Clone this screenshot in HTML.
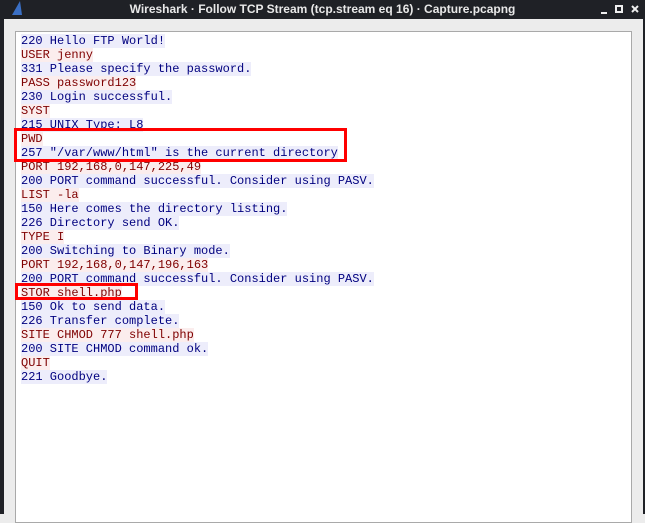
<html><head><style>
body{margin:0;width:645px;height:514px;background:#ececec;position:relative;overflow:hidden;font-family:"Liberation Sans",sans-serif}
.tb{position:absolute;left:0;top:0;width:645px;height:19px;background:#1f2126;color:#e8e8e8;font-size:12px;font-weight:bold;text-align:center;line-height:18px}
.ld{position:absolute;left:0;top:19px;width:4px;height:495px;background:#1f2126}
.rd{position:absolute;right:0;top:19px;width:2px;height:495px;background:#1f2126}
.ta{position:absolute;left:15px;top:31px;width:615px;height:490px;background:#fff;border:1px solid #a9a9a9}
.t{position:absolute;left:21px;top:34px;font:12px/14px "Liberation Mono",monospace;white-space:pre}
.c{color:#7f0000;background:#fbeded}.s{color:#00007f;background:#ededfb}
.box{position:absolute;border:3px solid #f00}
</style></head><body>
<div class="tb">Wireshark · Follow TCP Stream (tcp.stream eq 16) · Capture.pcapng</div>
<svg style="position:absolute;left:10px;top:0" width="14" height="16"><path d="M2 15 L10 1 L12 15 Z" fill="#3a6fc4"/></svg>
<svg style="position:absolute;left:600px;top:0" width="45" height="18"><rect x="1" y="12" width="6" height="2" fill="#eee"/><rect x="16" y="6" width="6" height="6" fill="none" stroke="#eee" stroke-width="2"/><path d="M32 6 L38 12 M38 6 L32 12" stroke="#eee" stroke-width="2"/></svg>
<div class="ld"></div><div class="rd"></div>
<div class="ta"></div>
<div class="t"><span class="s">220 Hello FTP World!</span>
<span class="c">USER jenny</span>
<span class="s">331 Please specify the password.</span>
<span class="c">PASS password123</span>
<span class="s">230 Login successful.</span>
<span class="c">SYST</span>
<span class="s">215 UNIX Type: L8</span>
<span class="c">PWD</span>
<span class="s">257 "/var/www/html" is the current directory</span>
<span class="c">PORT 192,168,0,147,225,49</span>
<span class="s">200 PORT command successful. Consider using PASV.</span>
<span class="c">LIST -la</span>
<span class="s">150 Here comes the directory listing.</span>
<span class="s">226 Directory send OK.</span>
<span class="c">TYPE I</span>
<span class="s">200 Switching to Binary mode.</span>
<span class="c">PORT 192,168,0,147,196,163</span>
<span class="s">200 PORT command successful. Consider using PASV.</span>
<span class="c">STOR shell.php</span>
<span class="s">150 Ok to send data.</span>
<span class="s">226 Transfer complete.</span>
<span class="c">SITE CHMOD 777 shell.php</span>
<span class="s">200 SITE CHMOD command ok.</span>
<span class="c">QUIT</span>
<span class="s">221 Goodbye.</span></div>
<div class="box" style="left:14px;top:128px;width:327px;height:28px"></div>
<div class="box" style="left:15px;top:283px;width:117px;height:11px"></div>
</body></html>
